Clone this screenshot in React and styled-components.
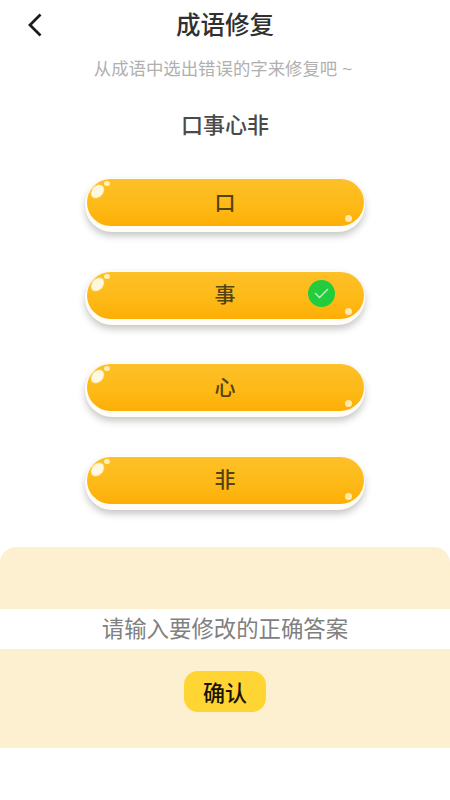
import styled, { createGlobalStyle } from 'styled-components'

const GlobalStyle = createGlobalStyle`
    * {
        box-sizing: border-box;
    }

    body {
        margin: 0;
        background: #fff;
        font-family: "Liberation Sans", "Noto Sans CJK SC", sans-serif;
    }
`

const Page = styled.div`
    width: 450px;
    height: 800px;
    overflow: hidden;
    display: flex;
    flex-direction: column;
    align-items: center;
    background: #fff;
`

const Header = styled.header`
    width: 100%;
    height: 52px;
    display: grid;
    grid-template-columns: 60px 1fr 60px;
    align-items: center;
`

const BackButton = styled.button`
    display: flex;
    align-items: center;
    justify-content: center;
    width: 60px;
    height: 52px;
    padding: 0 0 3px 9px;
    border: 0;
    background: none;
    color: #1c1c1c;
`

const Title = styled.h1`
    margin: 0;
    font-size: 24.5px;
    line-height: 52px;
    font-weight: 500;
    text-align: center;
    color: #303030;
`

const Subtitle = styled.p`
    margin: 5px 0 0;
    padding-right: 4px;
    font-size: 17.4px;
    line-height: 24px;
    color: #b0b0b0;
`

const Idiom = styled.h2`
    margin: 30px 0 37px;
    font-size: 22px;
    line-height: 30px;
    font-weight: 500;
    color: #4a4a4a;
`

const Options = styled.div`
    display: flex;
    flex-direction: column;
    gap: 38.6px;
`

const Option = styled.button`
    position: relative;
    display: flex;
    align-items: center;
    justify-content: center;
    width: 280px;
    height: 54px;
    padding: 0 0 9px;
    border: 0;
    border-radius: 27px;
    background: #fffdf5;
    box-shadow: 0 4px 7px rgba(80, 80, 80, 0.32);
    font-family: inherit;
    font-size: 21px;
    font-weight: 500;
    color: #554312;

    &::before {
        content: "";
        position: absolute;
        left: 1.5px;
        right: 1.5px;
        top: 1px;
        bottom: 6px;
        border-radius: 24px;
        background: linear-gradient(180deg, #fdc028 0%, #fdba18 55%, #feae05 100%);
    }
`

const OptionText = styled.span`
    position: relative;
`

const GlossLarge = styled.i`
    position: absolute;
    left: 7px;
    top: 6px;
    width: 11px;
    height: 15px;
    border-radius: 50%;
    background: #fff8e0;
    filter: blur(0.5px);
    transform: rotate(42deg);
`

const GlossSmall = styled.i`
    position: absolute;
    left: 19px;
    top: 3px;
    width: 6px;
    height: 5px;
    border-radius: 50%;
    background: #ffeeb8;
    filter: blur(0.5px);
`

const GlossCorner = styled.i`
    position: absolute;
    right: 13px;
    bottom: 10px;
    width: 7px;
    height: 7px;
    border-radius: 50%;
    background: #ffe9ad;
    filter: blur(0.5px);
`

const CheckBadge = styled.span`
    position: absolute;
    right: 30px;
    top: 9px;
    width: 27px;
    height: 27px;
    display: flex;
    align-items: center;
    justify-content: center;
    border-radius: 50%;
    background: #22cc3d;
    color: #c6efcc;
`

const Panel = styled.section`
    width: 100%;
    height: 201px;
    margin-top: 37px;
    padding-top: 62px;
    display: flex;
    flex-direction: column;
    align-items: center;
    border-radius: 16px 16px 0 0;
    background: #fdf0d0;
`

const AnswerInput = styled.input`
    width: 100%;
    height: 40px;
    padding: 3px 0 0;
    border: 0;
    outline: 0;
    background: #fff;
    font-family: inherit;
    font-size: 22.4px;
    text-align: center;
    color: #808080;

    &::placeholder {
        color: #808080;
        opacity: 1;
    }
`

const ConfirmButton = styled.button`
    width: 82px;
    height: 41px;
    margin-top: 22px;
    padding: 0;
    border: 0;
    border-radius: 14px;
    background: #fed532;
    font-family: inherit;
    font-size: 22px;
    font-weight: 500;
    color: #1a1208;
`

const chars = ['口', '事', '心', '非']

const App = () => {
    return (
        <Page>
            <GlobalStyle />
            <Header>
                <BackButton aria-label="返回">
                    <svg width="16" height="26" viewBox="0 0 16 26" fill="none">
                        <path d="M13.5 2.5 L3 13 L13.5 23.5" stroke="currentColor" strokeWidth="2.8" />
                    </svg>
                </BackButton>
                <Title>成语修复</Title>
            </Header>
            <Subtitle>从成语中选出错误的字来修复吧 ~</Subtitle>
            <Idiom>口事心非</Idiom>
            <Options>
                {chars.map((char) => (
                    <Option key={char}>
                        <OptionText>{char}</OptionText>
                        <GlossLarge />
                        <GlossSmall />
                        <GlossCorner />
                        {char === '事' && (
                            <CheckBadge>
                                <svg width="15" height="11" viewBox="0 0 15 11" fill="none">
                                    <path d="M1 5 L5.5 9.5 L14 1" stroke="currentColor" strokeWidth="1.3" />
                                </svg>
                            </CheckBadge>
                        )}
                    </Option>
                ))}
            </Options>
            <Panel>
                <AnswerInput placeholder="请输入要修改的正确答案" />
                <ConfirmButton>确认</ConfirmButton>
            </Panel>
        </Page>
    )
}

export default App
